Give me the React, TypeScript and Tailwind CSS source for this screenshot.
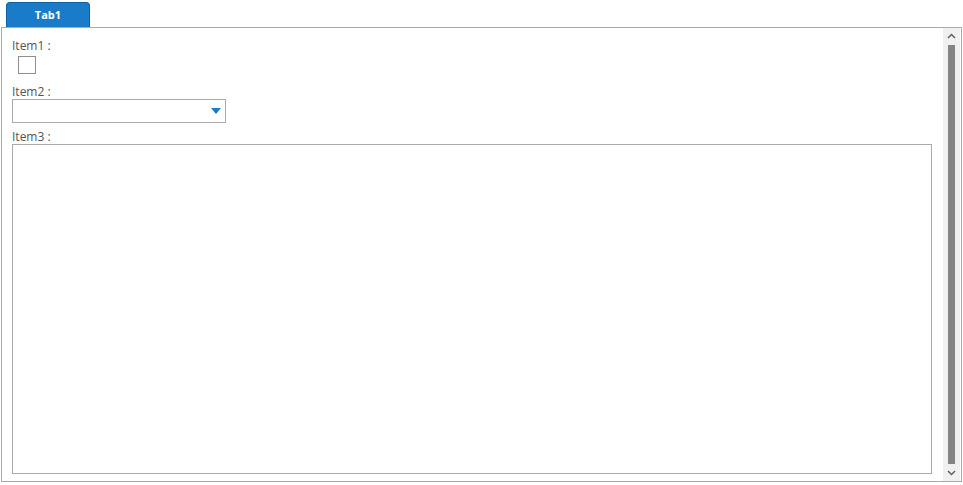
import React from "react"

const App = () => {
  return (
    <div
      className="w-[963px] h-[485px] bg-white overflow-hidden"
      style={{ fontFamily: '"Open Sans", "Liberation Sans", sans-serif' }}
    >
      <div className="h-[27px] flex items-end pl-[6px]">
        <div className="w-[84px] h-[25px] bg-[#1a7bc8] border border-b-0 border-[#0f5fa3] rounded-t-[4px] flex items-center justify-center text-white text-[11px] font-bold">
          Tab1
        </div>
      </div>
      <div className="ml-[1px] w-[961px] h-[455px] border border-[#a9a9a9] flex">
        <div className="flex-1 pl-[10px] pt-[11px] text-[12px] text-[#555] leading-[14px]">
          <div>Item1 :</div>
          <div className="ml-[6px] mt-[3px] w-[18px] h-[18px] border border-[#8f8f8f] bg-white" />
          <div className="mt-[11px]">Item2 :</div>
          <div className="w-[214px] h-[24px] border border-[#aaa] flex items-center justify-end pr-[4px]">
            <svg width="10" height="6" viewBox="0 0 10 6">
              <path d="M0 0 H10 L5 6 Z" fill="#1e7cc4" />
            </svg>
          </div>
          <div className="mt-[7px]">Item3 :</div>
          <div className="w-[920px] h-[330px] border border-[#aaa]" />
        </div>
        <div className="w-[17px] mr-[1px] bg-[#f0f0f0] flex flex-col items-center">
          <div className="h-[16px] flex items-center justify-center">
            <svg width="9" height="6" viewBox="0 0 9 6">
              <path d="M1 5 L4.5 1.5 L8 5" stroke="#606060" strokeWidth="1.5" fill="none" />
            </svg>
          </div>
          <div className="flex-1 w-[7px] bg-[#848484] my-[1px]" />
          <div className="h-[16px] flex items-center justify-center">
            <svg width="9" height="6" viewBox="0 0 9 6">
              <path d="M1 1 L4.5 4.5 L8 1" stroke="#606060" strokeWidth="1.5" fill="none" />
            </svg>
          </div>
        </div>
      </div>
    </div>
  )
}

export default App
